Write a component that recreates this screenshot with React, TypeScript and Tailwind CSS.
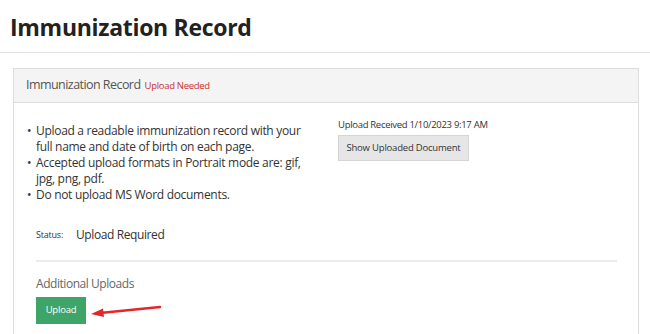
export default function App() {
  return (
    <div className="w-[650px] h-[334px] overflow-hidden bg-white font-['Open_Sans',sans-serif] text-[#333]">
      {/* page title */}
      <div className="h-[53px] border-b border-[#e3e3e3] pl-[10px] flex items-center">
        <h1 className="text-[23px] font-bold text-[#222] leading-none tracking-[-0.3px] mt-[2px]">Immunization Record</h1>
      </div>

      <div className="pt-[15px] pl-[13px] pr-[11px]">
        <div className="border border-[#dddddd] border-b-0">
          <div className="h-[34px] bg-[#f4f4f4] border-b border-[#dddddd] pl-[12px] flex items-center gap-[4px]">
            <span className="text-[12.5px] tracking-[-0.55px] text-[#555]">Immunization Record</span>
            <span className="text-[9.5px] tracking-[-0.3px] text-[#c9302c] mt-[2px]">Upload Needed</span>
          </div>

          <div className="relative pl-[13px] pt-[20px] pb-[20px]">
            <div className="flex">
              <ul className="w-[311px] pr-[32px] text-[12px] tracking-[-0.3px] leading-[16px] text-[#333]">
                <li className="flex">
                  <span className="w-[9px] shrink-0">•</span>
                  <span>Upload a readable immunization record with your full name and date of birth on each page.</span>
                </li>
                <li className="flex">
                  <span className="w-[9px] shrink-0">•</span>
                  <span>Accepted upload formats in Portrait mode are: gif, jpg, png, pdf.</span>
                </li>
                <li className="flex">
                  <span className="w-[9px] shrink-0">•</span>
                  <span>Do not upload MS Word documents.</span>
                </li>
              </ul>
              <div className="-mt-[5px]">
                <div className="text-[9.5px] tracking-[-0.3px] leading-[14px] text-[#333]">Upload Received 1/10/2023 9:17 AM</div>
                <button className="mt-[3px] h-[26px] w-[131px] bg-[#e6e6e6] border border-[#d4d4d4] text-[9.5px] tracking-[-0.2px] text-[#333]">
                  Show Uploaded Document
                </button>
              </div>
            </div>

            <div className="pl-[9px] pr-[8px]">
              <div className="mt-[22px] flex items-center h-[20px]">
                <span className="text-[9px] tracking-[-0.2px] text-[#333] w-[40px]">Status:</span>
                <span className="text-[12px] tracking-[-0.4px] text-[#333]">Upload Required</span>
              </div>
              <div className="mt-[15px] border-t-2 border-[#ececec] w-[581px]" />
              <div className="mt-[14px] text-[12px] tracking-[-0.45px] leading-[16px] text-[#666]">Additional Uploads</div>
              <div className="mt-[5px] flex items-center">
                <button className="h-[27px] w-[50px] bg-[#3fa467] text-white text-[9.5px] tracking-[-0.2px]">Upload</button>
                <svg width="72" height="14" viewBox="0 0 72 14" className="ml-[4px] mt-[1px]">
                  <line x1="10" y1="9" x2="70" y2="3" stroke="#e3262a" strokeWidth="2.4" strokeLinecap="round" />
                  <polygon points="1,10 13,4.5 14,13" fill="#e3262a" />
                </svg>
              </div>
            </div>
          </div>
        </div>
      </div>
    </div>
  );
}
